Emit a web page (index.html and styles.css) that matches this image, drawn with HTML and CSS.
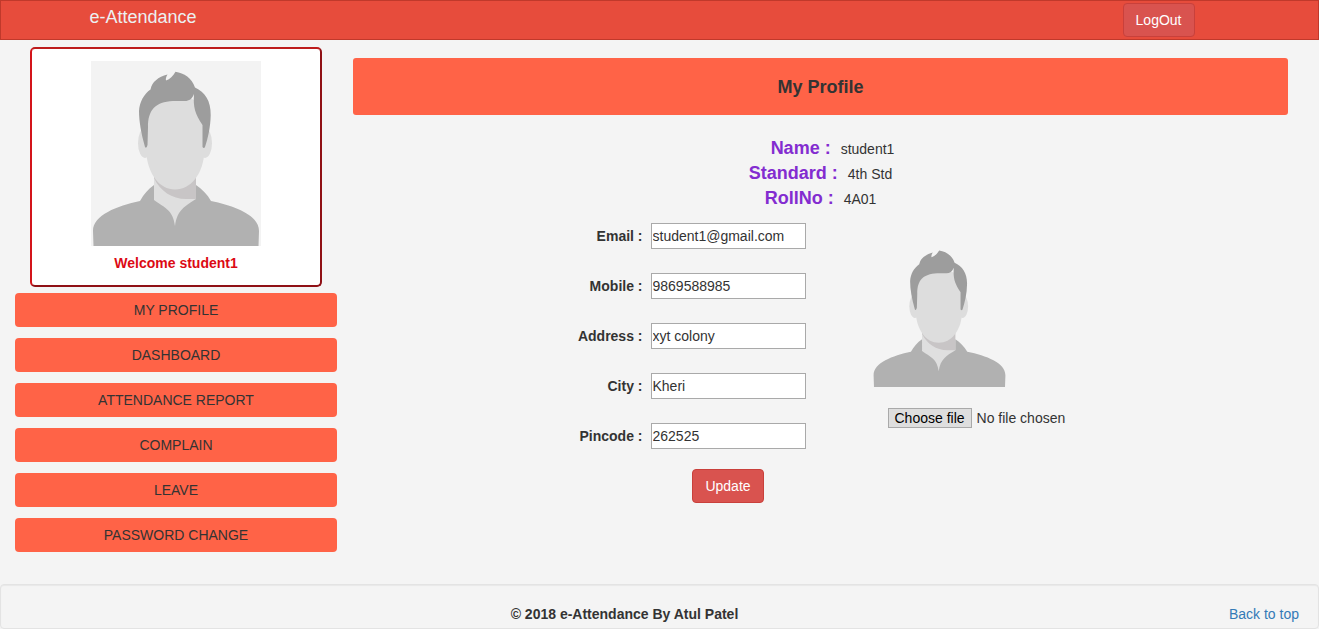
FILE: index.html
```html
<!DOCTYPE html>
<html lang="en-GB">
<head>
<meta charset="utf-8">
<meta name="viewport" content="width=device-width, initial-scale=1">
<title>e-Attendance</title>
<link rel="stylesheet" href="styles.css">
</head>
<body>
<svg class="sprite" aria-hidden="true">
  <symbol id="avatar" viewBox="0 0 170 185" preserveAspectRatio="none">
    <path fill="#c8c5c6" d="M63 112H105V140H63Z"/>
    <path fill="#dfdfdf" d="M63 117C69 130 81 138 95 138H105V142L84 166L63 142Z"/>
    <path fill="#b1b1b1" d="M63 124C57 128 53 133 49 140C26 145 2 154 2 170L2.500 185H167.500L168 170C168 154 144 145 120 140C116 133 111 128 105 124V138C94 145 86 149 84 165C82 149 74 147 63 139Z"/>
    <ellipse cx="54" cy="82" rx="7" ry="15" fill="#dddddd"/>
    <ellipse cx="114" cy="82" rx="7" ry="15" fill="#dddddd"/>
    <path fill="#dddddd" d="M55.500 95V50C60 30 108 30 113 50V95C111 113 100 128.500 84 128.500C68 128.500 58 113 55.500 95Z"/>
    <path fill="#9d9d9d" d="M54 86C50 72 48 60 48 50C48.500 41 53 33 59.500 28.500C61 21 67 16 76.500 13.500C75 16 74.500 18 75 19.500C79 18 82 15 84.500 10.700C93 12 101 17 104 26.500C114 31 120 40 119.700 54C119.500 66 117 77 114 86Q113 88 111.500 86V64C104 53 102 46 103 33C101 38 98 40 94 40H82C64 41 57 49 57 66L56.500 84Q55.500 88 54 86Z"/>
  </symbol>
</svg>

<header class="topbar" id="top">
  <div class="topbar-inner">
    <a class="brand" href="#top">e-Attendance</a>
    <button class="btn btn-logout" type="button">LogOut</button>
  </div>
</header>

<div class="page">
  <aside class="sidebar">
    <div class="welcome">
      <svg class="portrait" role="img" aria-label="Profile picture"><use href="#avatar"/></svg>
      <strong class="welcome-text">Welcome student1</strong>
    </div>
    <nav class="menu">
      <a href="#profile">MY PROFILE</a>
      <a href="#dashboard">DASHBOARD</a>
      <a href="#report">ATTENDANCE REPORT</a>
      <a href="#complain">COMPLAIN</a>
      <a href="#leave">LEAVE</a>
      <a href="#password">PASSWORD CHANGE</a>
    </nav>
  </aside>

  <main class="content" id="profile">
    <h1 class="title">My Profile</h1>
    <dl class="facts">
      <div class="fact-name"><dt>Name :</dt><dd>student1</dd></div>
      <div><dt>Standard :</dt><dd>4th Std</dd></div>
      <div><dt>RollNo :</dt><dd>4A01</dd></div>
    </dl>
    <form class="profile-form">
      <div class="fields">
        <label for="email">Email :</label><input id="email" type="text" value="student1@gmail.com">
        <label for="mobile">Mobile :</label><input id="mobile" type="text" value="9869588985">
        <label for="address">Address :</label><input id="address" type="text" value="xyt colony">
        <label for="city">City :</label><input id="city" type="text" value="Kheri">
        <label for="pincode">Pincode :</label><input id="pincode" type="text" value="262525">
        <button class="btn btn-update" type="submit">Update</button>
      </div>
      <div class="photo">
        <svg class="photo-preview" role="img" aria-label="Current photo"><use href="#avatar"/></svg>
        <div class="file">
          <input class="file-input" id="photo" type="file">
          <label class="file-button" for="photo">Choose file</label>
          <span>No file chosen</span>
        </div>
      </div>
    </form>
  </main>
</div>

<footer class="footer">
  <strong class="copyright">© 2018 e-Attendance By Atul Patel</strong>
  <a href="#top">Back to top</a>
</footer>
</body>
</html>
```
FILE: styles.css
```css
* {
  box-sizing: border-box;
}

body {
  margin: 0;
  min-height: 100vh;
  display: flex;
  flex-direction: column;
  background: #f4f4f4;
  color: #333;
  font: 14px/20px "Liberation Sans", Arial, sans-serif;
}

.sprite {
  position: absolute;
  width: 0;
  height: 0;
}

.topbar {
  background: #e74c3c;
  border: 1px solid #c0392b;
}

.topbar-inner {
  display: flex;
  justify-content: space-between;
  align-items: flex-start;
  max-width: 1170px;
  margin: 0 auto;
  padding: 2px 50px 2px 15px;
}

.brand {
  padding-top: 4px;
  color: #ecf0f1;
  font-size: 18px;
  text-decoration: none;
}

.btn {
  padding: 6px 12px;
  border: 1px solid #c9403b;
  border-radius: 4px;
  background: #d9534f;
  color: #fff;
  font: inherit;
}

.page {
  flex: 1;
  display: grid;
  grid-template-columns: 322px 1fr;
  gap: 16px;
  padding: 7px 31px 32px 15px;
}

.welcome {
  display: flex;
  flex-direction: column;
  align-items: center;
  gap: 7px;
  margin: 0 15px 6px;
  padding: 12px 0;
  border: 2px solid;
  border-color: #bd1c1c #8f1015 #8f1015 #d3141a;
  border-radius: 5px;
  background: #fff;
}

.portrait {
  display: block;
  width: 170px;
  height: 185px;
  background: #f3f3f3;
}

.welcome-text {
  color: #dc0a14;
}

.menu {
  display: grid;
  gap: 11px;
}

.menu a {
  padding: 7px 12px;
  border-radius: 4px;
  background: #ff6347;
  color: #333;
  text-align: center;
  text-decoration: none;
}

.content {
  padding-top: 11px;
}

.title {
  margin: 0 0 21px;
  padding: 20px 19px 18px;
  border-radius: 3px;
  background: #ff6347;
  font-size: 18px;
  line-height: 19px;
  text-align: center;
}

.facts {
  margin: 0 0 12px;
}

.facts div {
  display: flex;
  justify-content: center;
  align-items: baseline;
  gap: 10px;
}

.facts .fact-name {
  padding-left: 24px;
}

.facts dt {
  color: #832cd0;
  font-size: 18px;
  font-weight: bold;
  line-height: 25px;
}

.facts dd {
  margin: 0;
}

.profile-form {
  display: grid;
  grid-template-columns: 1fr 1fr;
}

.fields {
  display: grid;
  grid-template-columns: 1fr 155px;
  column-gap: 8px;
  row-gap: 24px;
  align-items: center;
  padding-right: 15px;
}

.fields label {
  font-weight: bold;
  text-align: right;
}

.fields input {
  width: 100%;
  height: 26px;
  padding: 1px;
  border: 1px solid #a9a9a9;
  background: #fff;
  color: #333;
  font: inherit;
}

.btn-update {
  grid-column: 2;
  justify-self: center;
  margin-top: -4px;
}

.photo {
  padding: 19px 0 0 51px;
}

.photo-preview {
  display: block;
  width: 135px;
  height: 145px;
}

.file {
  display: flex;
  align-items: center;
  gap: 5px;
  margin: 21px 0 0 16px;
}

.file-input {
  position: absolute;
  width: 1px;
  height: 1px;
  opacity: 0;
}

.file-button {
  padding: 0 6px;
  border: 1px solid #a9a9a9;
  background: #dedede;
  color: #000;
  line-height: 18px;
}

.footer {
  display: flex;
  align-items: center;
  padding: 19px 19px 4px;
  border: 1px solid #e3e3e3;
  border-radius: 4px;
  box-shadow: inset 0 1px 1px rgba(0, 0, 0, 0.05);
}

.copyright {
  flex: 1;
  text-align: center;
}

.footer a {
  color: #337ab7;
  text-decoration: none;
}
```
